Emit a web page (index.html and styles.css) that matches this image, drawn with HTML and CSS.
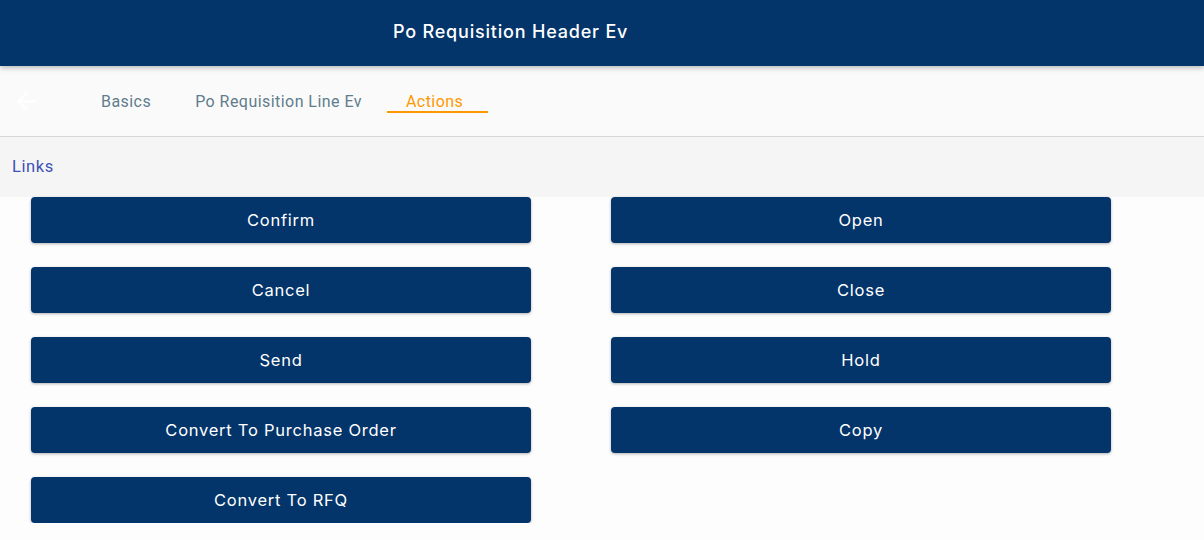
FILE: index.html
```html
<!DOCTYPE html>
<html>
<head>
<meta charset="utf-8">
<link rel="stylesheet" href="styles.css">
</head>
<body>
<header class="topbar">
  <h1 class="title">Po Requisition Header Ev</h1>
</header>
<nav class="tabbar">
  <div class="back">
    <svg width="29" height="29" viewBox="0 0 24 24"><path d="M20 11H7.83l5.59-5.59L12 4l-8 8 8 8 1.41-1.41L7.83 13H20v-2z" fill="#ffffff"/></svg>
  </div>
  <div class="tab">Basics</div>
  <div class="tab">Po Requisition Line Ev</div>
  <div class="tab active">Actions</div>
</nav>
<section class="links">Links</section>
<main class="actions">
  <button class="btn">Confirm</button>
  <button class="btn">Open</button>
  <button class="btn">Cancel</button>
  <button class="btn">Close</button>
  <button class="btn">Send</button>
  <button class="btn">Hold</button>
  <button class="btn">Convert To Purchase Order</button>
  <button class="btn">Copy</button>
  <button class="btn">Convert To RFQ</button>
</main>
</body>
</html>
```
FILE: styles.css
```css
html, body {
  margin: 0;
  padding: 0;
  background: #fdfdfd;
  font-family: Roboto, "Liberation Sans", sans-serif;
}
.topbar {
  height: 66px;
  background: #03346a;
  display: flex;
  align-items: center;
  padding-left: 393px;
  box-sizing: border-box;
  position: relative;
  z-index: 2;
  box-shadow: 0 2px 5px rgba(0,0,0,0.25);
}
.title {
  margin: 0 0 4px 0;
  font-family: Inter, "Open Sans", sans-serif;
  font-size: 18px;
  font-weight: 500;
  color: #ffffff;
  letter-spacing: 0.8px;
}
.tabbar {
  height: 70px;
  background: #fafafa;
  border-bottom: 1px solid #d8d8d8;
  display: flex;
  align-items: stretch;
  position: relative;
  z-index: 1;
}
.back {
  width: 79px;
  display: flex;
  align-items: center;
  padding-left: 12px;
  box-sizing: border-box;
  padding-top: 1px;
}
.tab {
  padding: 0 22px;
  display: flex;
  align-items: center;
  font-size: 16px;
  letter-spacing: 0.45px;
  color: #5f7d8c;
  position: relative;
}
.tab.active {
  color: #ff9800;
}
.tab.active::after {
  content: "";
  position: absolute;
  left: 3px;
  right: -3px;
  top: 45px;
  height: 2px;
  background: #ff9800;
}
.links {
  height: 60px;
  background: #f5f5f5;
  display: flex;
  align-items: center;
  padding-left: 12px;
  padding-bottom: 2px;
  box-sizing: border-box;
  font-size: 16.5px;
  letter-spacing: 0.6px;
  color: #3f51b5;
}
.actions {
  display: grid;
  grid-template-columns: 500px 500px;
  column-gap: 80px;
  row-gap: 24px;
  padding-left: 31px;
}
.btn {
  height: 46px;
  border: none;
  border-radius: 4px;
  background: #03346a;
  color: #ffffff;
  font-family: Inter, "Open Sans", sans-serif;
  font-size: 16.5px;
  font-weight: 400;
  letter-spacing: 0.75px;
  box-shadow: 0 1px 3px rgba(0,0,0,0.3);
  padding: 0;
  padding-bottom: 1px;
}
```
